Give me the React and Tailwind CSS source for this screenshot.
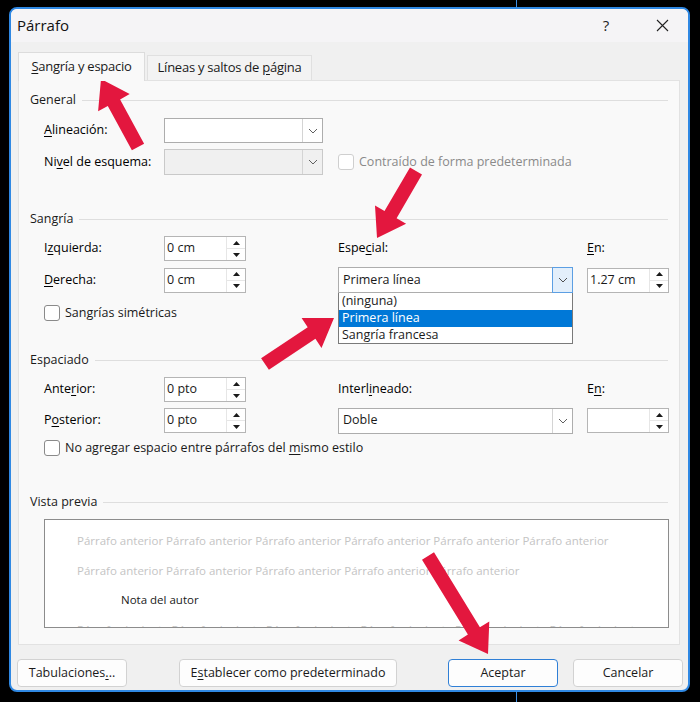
import React from "react";

// red annotation arrow, tail -> tip
const arrowPoints = (tx, ty, px, py, sw = 14, hw = 36, hl = 27) => {
  const dx = px - tx;
  const dy = py - ty;
  const len = Math.hypot(dx, dy);
  const ux = dx / len;
  const uy = dy / len;
  const nx = -uy;
  const ny = ux;
  const bx = px - ux * hl;
  const by = py - uy * hl;
  const p = [
    [tx + (nx * sw) / 2, ty + (ny * sw) / 2],
    [bx + (nx * sw) / 2, by + (ny * sw) / 2],
    [bx + (nx * hw) / 2, by + (ny * hw) / 2],
    [px, py],
    [bx - (nx * hw) / 2, by - (ny * hw) / 2],
    [bx - (nx * sw) / 2, by - (ny * sw) / 2],
    [tx - (nx * sw) / 2, ty - (ny * sw) / 2],
  ];
  return p.map(([x, y]) => `${x.toFixed(1)},${y.toFixed(1)}`).join(" ");
};

const Chevron = ({ color = "#606060" }) => (
  <svg width="10" height="6" viewBox="0 0 10 6" fill="none">
    <path d="M1 1L5 5L9 1" stroke={color} strokeWidth="1" />
  </svg>
);

const U = ({ children }) => <span className="underline underline-offset-2">{children}</span>;

const Heading = ({ children }) => (
  <div className="h-[20px] flex items-center pl-[11px] pr-[11px]">
    <span className="text-[#1a1a1a]">{children}</span>
    <div className="flex-1 h-px bg-[#dedede] ml-[6px]" />
  </div>
);

const Spin = ({ value, w = "w-[82px]", h = "h-[25px]" }) => (
  <div className={`${w} ${h} flex bg-white border border-[#b5b5b5]`}>
    <div className="flex-1 flex items-center pl-[2px] text-[#1a1a1a]">{value}</div>
    <div className="w-[19px] flex flex-col border-l border-[#e6e6e6]">
      <div className="flex-1 flex items-center justify-center border-b border-[#e6e6e6]">
        <svg width="7" height="4" viewBox="0 0 7 4">
          <path d="M0 4L3.5 0L7 4Z" fill="#1a1a1a" />
        </svg>
      </div>
      <div className="flex-1 flex items-center justify-center">
        <svg width="7" height="4" viewBox="0 0 7 4">
          <path d="M0 0L3.5 4L7 0Z" fill="#1a1a1a" />
        </svg>
      </div>
    </div>
  </div>
);

const Select = ({ value, w, h = "h-[25px]", disabled, active }) => (
  <div
    className={`${w} ${h} flex border ${
      disabled ? "bg-[#f0f0f0] border-[#c9c9c9]" : "bg-white border-[#adadad]"
    }`}
  >
    <div className="flex-1 flex items-center pl-[4px] text-[#1a1a1a]">{value}</div>
    {active ? (
      <div className="w-[21px] flex items-center justify-center bg-[#e3effb] border border-[#5c9fe3] -my-px -mr-px">
        <Chevron color="#505050" />
      </div>
    ) : (
      <div className="w-[20px] flex items-center justify-center border-l border-[#d4d4d4]">
        <Chevron />
      </div>
    )}
  </div>
);

const Check = ({ label, disabled }) => (
  <div className="flex items-center gap-[5px]">
    <div
      className={`w-[16px] h-[16px] rounded-[3px] border bg-white ${
        disabled ? "border-[#cfcfcf]" : "border-[#8a8a8a]"
      }`}
    />
    <span className={disabled ? "text-[#8a8a8a]" : "text-[#1a1a1a]"}>{label}</span>
  </div>
);

const Btn = ({ children, w, primary }) => (
  <div
    className={`${w} h-[28px] flex items-center justify-center rounded-[4px] bg-[#fdfdfd] text-[#1a1a1a] ${
      primary ? "border border-[#2f7fd6]" : "border border-[#d2d2d2]"
    }`}
  >
    {children}
  </div>
);

const prevLine = (word, n) => Array(n).fill(word).join(" ");

export default function App() {
  return (
    <div className="relative w-[700px] h-[702px] bg-black pt-[7px] pl-[9px] overflow-hidden font-['Open_Sans',sans-serif] text-[12.5px]">
      {/* thin blue line from the desktop behind */}
      <div className="absolute left-[516px] top-0 w-px h-[8px] bg-[#3b8fe6]" />
      <div className="absolute left-[516px] bottom-0 w-px h-[11px] bg-[#3b8fe6]" />

      <div className="w-[681px] h-[685px] rounded-[8px] border-2 border-[#2f88e3] bg-[#f0f0f0] flex flex-col overflow-hidden">
        {/* title bar */}
        <div className="h-[33px] flex items-center pl-[6px] pr-[3px] bg-[#f5f4f6]">
          <span className="text-[15px] text-[#111]">Párrafo</span>
          <div className="ml-auto flex gap-[10px]">
            <div className="w-[46px] flex items-center justify-center text-[15px] text-[#222]">?</div>
            <div className="w-[46px] flex items-center justify-center">
              <svg width="13" height="13" viewBox="0 0 13 13">
                <path d="M1 1L12 12M12 1L1 12" stroke="#222" strokeWidth="1.1" />
              </svg>
            </div>
          </div>
        </div>

        {/* tabs */}
        <div className="h-[38px] pl-[7px] flex items-end gap-[2px] text-[13px] tracking-[-0.25px]">
          <div className="relative z-10 w-[127px] h-[29px] -mb-px flex items-center justify-center bg-[#f9f9f9] border-t border-l border-r border-[#dcdcdc] text-[#1a1a1a]">
            <span>
              <U>S</U>angría y espacio
            </span>
          </div>
          <div className="w-[165px] h-[25px] flex items-center justify-center bg-[#f3f3f3] border-t border-l border-r border-[#e0e0e0] text-[#1a1a1a]">
            <span>
              Líneas y saltos de <U>p</U>ágina
            </span>
          </div>
        </div>

        {/* panel */}
        <div className="ml-[7px] w-[662px] h-[565px] bg-[#f9f9f9] border border-[#e2e2e2] pt-[9px]">
          <Heading>General</Heading>
          <div className="mt-[8px] pl-[25px] flex items-center h-[25px]">
            <div className="w-[120px]">
              <U>A</U>lineación:
            </div>
            <Select w="w-[159px]" value="" />
          </div>
          <div className="mt-[6px] pl-[25px] flex items-center h-[26px]">
            <div className="w-[120px]">
              Ni<U>v</U>el de esquema:
            </div>
            <Select w="w-[159px]" h="h-[26px]" value="" disabled />
            <div className="ml-[15px]">
              <Check label="Contraído de forma predeterminada" disabled />
            </div>
          </div>

          <div className="mt-[34px]">
            <Heading>Sangría</Heading>
          </div>
          <div className="mt-[7px] pl-[25px] flex items-center h-[25px]">
            <div className="w-[120px]">
              I<U>z</U>quierda:
            </div>
            <Spin value="0 cm" />
            <div className="ml-[92px] w-[235px]">
              Espe<U>c</U>ial:
            </div>
            <div className="ml-[14px]">
              <U>E</U>n:
            </div>
          </div>
          <div className="mt-[6px] pl-[25px] flex items-center h-[26px]">
            <div className="w-[120px]">
              <U>D</U>erecha:
            </div>
            <Spin value="0 cm" />
            <div className="relative ml-[92px]">
              <Select w="w-[235px]" h="h-[26px]" value="Primera línea" active />
              <div className="absolute left-0 top-full w-[235px] bg-white border-l border-r border-b border-[#7a7a7a] z-20">
                <div className="h-[17px] flex items-center pl-[3px] text-[#1a1a1a]">(ninguna)</div>
                <div className="h-[17px] flex items-center pl-[3px] bg-[#0078d7] text-white">Primera línea</div>
                <div className="h-[16px] flex items-center pl-[3px] text-[#1a1a1a]">Sangría francesa</div>
              </div>
            </div>
            <div className="ml-[14px]">
              <Spin value="1.27 cm" />
            </div>
          </div>
          <div className="mt-[10px] pl-[25px] h-[20px] flex items-center">
            <Check
              label={
                <>
                  San<U>g</U>rías simétricas
                </>
              }
            />
          </div>

          <div className="mt-[27px]">
            <Heading>Espaciado</Heading>
          </div>
          <div className="mt-[7px] pl-[25px] flex items-center h-[25px]">
            <div className="w-[120px]">
              Ante<U>r</U>ior:
            </div>
            <Spin value="0 pto" />
            <div className="ml-[92px] w-[235px]">
              Interl<U>i</U>neado:
            </div>
            <div className="ml-[14px]">
              E<U>n</U>:
            </div>
          </div>
          <div className="mt-[6px] pl-[25px] flex items-center h-[25px]">
            <div className="w-[120px]">
              P<U>o</U>sterior:
            </div>
            <Spin value="0 pto" />
            <div className="ml-[92px]">
              <Select w="w-[235px]" h="h-[26px]" value="Doble" />
            </div>
            <div className="ml-[14px]">
              <Spin value="" />
            </div>
          </div>
          <div className="mt-[5px] pl-[25px] h-[20px] flex items-center">
            <Check
              label={
                <>
                  No agregar espacio entre párrafos del <U>m</U>ismo estilo
                </>
              }
            />
          </div>

          <div className="mt-[34px]">
            <Heading>Vista previa</Heading>
          </div>
          <div className="mt-[7px] ml-[25px] w-[625px] h-[109px] bg-white border border-[#8c8c8c] overflow-hidden pt-[6px] text-[11.5px] leading-[29.5px] whitespace-nowrap">
            <div className="pl-[32px] text-[#c4c4c4]">{prevLine("Párrafo anterior", 6)}</div>
            <div className="pl-[32px] text-[#c4c4c4]">{prevLine("Párrafo anterior", 5)}</div>
            <div className="pl-[76px] text-[#1a1a1a]">Nota del autor</div>
            <div className="pl-[32px] text-[#c4c4c4]">{prevLine("Párrafo siguiente", 6)}</div>
          </div>
        </div>

        {/* buttons */}
        <div className="mt-[14px] pl-[6px] flex items-center">
          <Btn w="w-[110px]">
            <span>
              Tabulaciones<U>.</U>..
            </span>
          </Btn>
          <div className="ml-[52px]">
            <Btn w="w-[218px]">
              <span>
                E<U>s</U>tablecer como predeterminado
              </span>
            </Btn>
          </div>
          <div className="ml-[51px]">
            <Btn w="w-[110px]" primary>
              Aceptar
            </Btn>
          </div>
          <div className="ml-[15px]">
            <Btn w="w-[110px]">Cancelar</Btn>
          </div>
        </div>
      </div>

      {/* red annotation arrows */}
      <svg className="absolute inset-0 pointer-events-none" width="700" height="702" viewBox="0 0 700 702">
        <polygon points={arrowPoints(138, 147, 101, 79)} fill="#e3173e" />
        <polygon points={arrowPoints(416, 171, 377, 238)} fill="#e3173e" />
        <polygon points={arrowPoints(265, 364, 334, 318)} fill="#e3173e" />
        <polygon points={arrowPoints(428, 556, 488, 654)} fill="#e3173e" />
      </svg>
    </div>
  );
}
